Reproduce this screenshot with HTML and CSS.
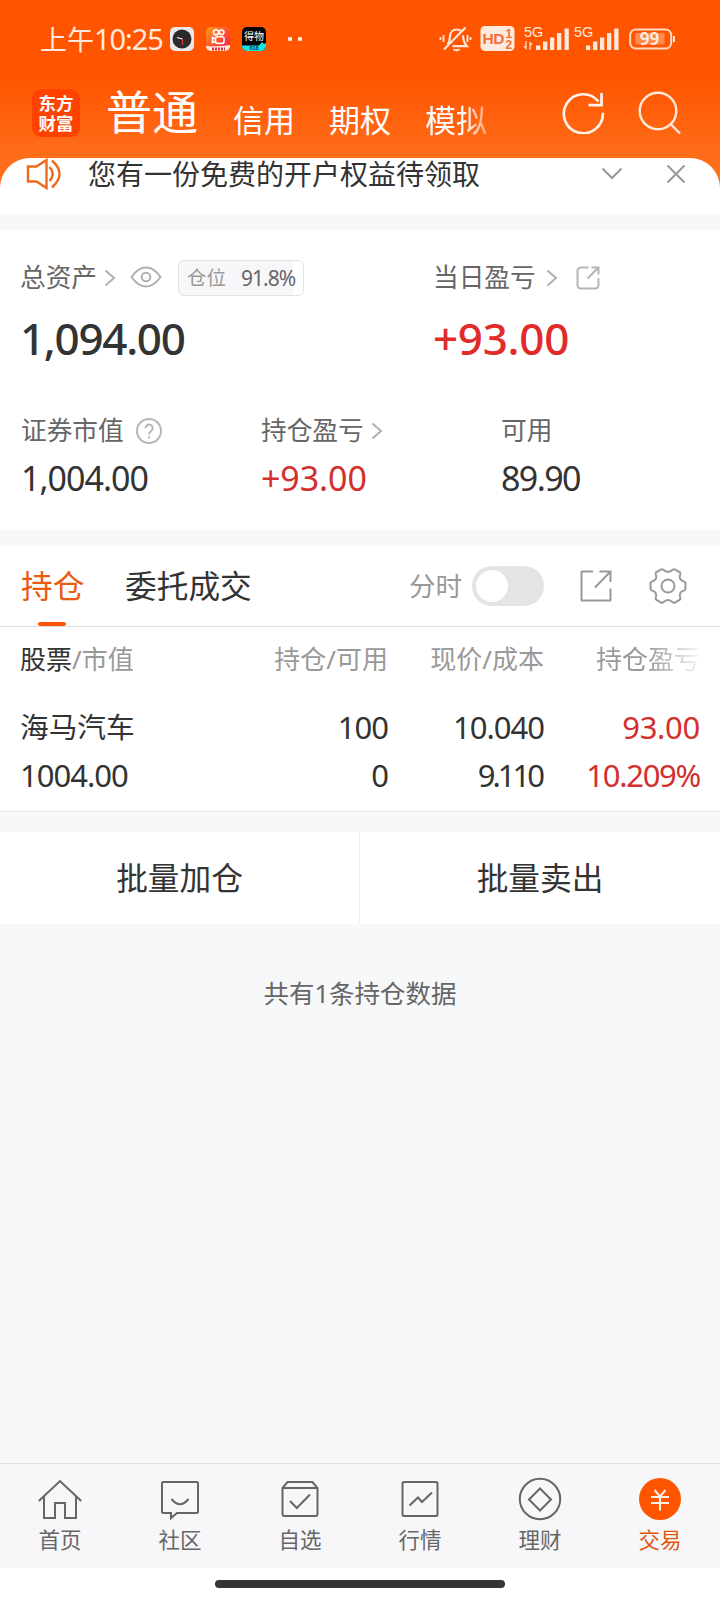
FILE: index.html
```
<!DOCTYPE html>
<html lang="zh-CN">
<head>
  <meta charset="UTF-8">
  <title>交易 - 持仓</title>
  <link rel="stylesheet" href="styles.css">
</head>
<body>

<div class="app">
  <header class="top">
    <div class="status">
      <span class="hora">上午<b>10:25</b></span>
      <svg class="app-icon" width="24" height="24" viewBox="0 0 24 24">
        <rect width="24" height="24" rx="5" fill="#e9e9e9"/>
        <circle cx="12" cy="12" r="9.5" fill="#2b2b2b"/>
        <path d="M7 10.5l5.500 1.500" stroke="#fff" stroke-width="1.200"/>
        <path d="M12.500 12v6" stroke="#e0402c" stroke-width="1.200"/>
      </svg>
      <svg class="app-icon" width="24" height="24" viewBox="0 0 24 24">
        <defs>
          <linearGradient id="ks" x1="0" y1="0" x2="1" y2="1"><stop offset="0" stop-color="#ffa21a"/><stop offset=".55" stop-color="#ff4a33"/><stop offset="1" stop-color="#f5234f"/></linearGradient>
          <clipPath id="r5"><rect width="24" height="24" rx="5"/></clipPath>
        </defs>
        <g clip-path="url(#r5)">
          <rect width="24" height="24" fill="url(#ks)"/>
          <path d="M0 19q12 1 24-1v6H0z" fill="#ffe9dc"/>
          <g fill="none" stroke="#fff" stroke-width="1.600"><circle cx="10" cy="5.300" r="2.600"/><circle cx="15.600" cy="5.300" r="2.300"/><rect x="9.500" y="9.800" width="8.500" height="6.600" rx="1.800"/><path d="M9.500 12l-3-1.400v5l3-1.400"/></g>
          <path d="M6 22h13" stroke="#e3323c" stroke-width="3" stroke-dasharray="2 1"/>
        </g>
      </svg>
      <svg class="app-icon" width="24" height="24" viewBox="0 0 24 24">
        <g clip-path="url(#r5)">
          <rect width="24" height="24" fill="#050505"/>
          <path d="M0 18.500h17l3-3.500 2 2 2-1v8H0z" fill="#14e5e8"/>
          <text x="12" y="12.500" class="dewu">得物</text>
          <text x="12" y="23" class="dewu-618">618</text>
        </g>
      </svg>
      <span class="dots"><i></i><i></i></span>

      <svg class="sys" width="240" height="32" viewBox="0 0 240 32">
        <g fill="none" stroke="#ffe6d8" stroke-width="2.200">
          <path d="M8.500 21.500c2-2 2.300-4 2.300-7 0-5 3-8 7-8 2 0 3.500.600 4.800 2M24 12.500c.2 5 1 7.500 4 10.700H13.500"/>
          <path d="M5 26.500L26.500 4.500"/>
          <path d="M4.500 12v7M1.500 14v3M28.500 12v7M31.500 14v3" stroke-width="1.800"/>
          <path d="M14 26.500q3.500 3 7 0z" fill="#ffe6d8" stroke-width="1"/>
        </g>
        <rect x="41.500" y="3" width="34" height="25" rx="4.500" fill="#ffe9dd"/>
        <text x="43.500" y="21" class="hd">HD</text>
        <text x="66.500" y="14.500" class="hd-n">1</text>
        <text x="66.500" y="25.500" class="hd-n">2</text>
        <g fill="#ffe9dd">
          <text x="85" y="14" class="g5">5G</text>
          <path d="M87.500 18v9l-3.200-4h2v-5zM90.500 27v-9l3.200 4h-2v5z"/>
          <path d="M97 22.500h4.300v4.500H97zM104 18.500h4.300V27H104zM111 14.500h4.300V27H111zM118 10h4.300v17H118zM125.500 5.500h4.300V27h-4.300z"/>
          <text x="135" y="14" class="g5">5G</text>
          <path d="M147 22.500h4.300v4.500H147zM154 18.500h4.300V27H154zM161 14.500h4.300V27H161zM168 10h4.300v17H168zM175.200 5.500h4.300V27h-4.300z"/>
        </g>
        <rect x="191.200" y="6.500" width="41" height="19" rx="5.500" fill="none" stroke="#ffd9c4" stroke-width="2"/>
        <rect x="196" y="10" width="29.500" height="11.500" fill="#ff8a4d"/>
        <path d="M235 13v6" stroke="#ffe9dd" stroke-width="2"/>
        <text x="210.500" y="22" class="bat">99</text>
      </svg>
    </div>

    <div class="cuentas">
      <div class="logo"><span>东方</span><span>财富</span></div>
      <span class="cuenta activa">普通</span>
      <span class="cuenta">信用</span>
      <span class="cuenta">期权</span>
      <span class="cuenta fade">模拟</span>
      <svg class="refresh" width="44" height="44" viewBox="0 0 44 44" fill="none" stroke="#fff3ea" stroke-width="2.700">
        <path d="M41.800 22.800A19.500 19.500 0 1 1 37.500 11.500"/>
        <path d="M40.500 3v12.200H27.500"/>
      </svg>
      <svg class="search" width="44" height="44" viewBox="0 0 44 44" fill="none" stroke="#ffe8d9" stroke-width="2.400">
        <circle cx="20" cy="20" r="18.300"/>
        <path d="M32.500 33l9.500 9.500"/>
      </svg>
    </div>
  </header>

  <div class="aviso">
    <svg class="altavoz" width="36" height="32" viewBox="0 0 36 32" fill="none" stroke="#ec6a1e" stroke-width="2.400">
      <path d="M2 8.500h8.500L20.500 2v28l-10-6.500H2zM23.500 9q6.500 7 0 14M26 2.500q15 13.500 0 27"/>
    </svg>
    <span class="aviso-texto">您有一份免费的开户权益待领取</span>
    <svg class="abajo" width="22" height="14" viewBox="0 0 22 14" fill="none" stroke="#999" stroke-width="2"><path d="M1.500 1.500l9.500 9.500 9.500-9.500"/></svg>
    <svg class="cerrar" width="20" height="20" viewBox="0 0 20 20" fill="none" stroke="#999" stroke-width="2"><path d="M1.500 1.500l17 17M18.500 1.500l-17 17"/></svg>
  </div>

  <section class="activos">
    <div class="fila principal">
      <div class="dato grande">
        <div class="etiqueta"><span>总资产</span>
          <svg class="flecha" width="12" height="18" viewBox="0 0 12 18"><path d="M1.500 1.500L10 9l-8.500 7.500"/></svg>
          <svg class="ojo" width="32" height="22" viewBox="0 0 32 22" fill="none" stroke="#b0b0b0" stroke-width="2"><path d="M1.500 11Q8 1.500 16 1.500T30.500 11Q24 20.500 16 20.500T1.500 11z"/><circle cx="16" cy="11" r="4.300"/></svg>
          <span class="posicion">仓位<em>91.8%</em></span>
        </div>
        <div class="valor">1,094.00</div>
      </div>
      <div class="dato grande">
        <div class="etiqueta"><span>当日盈亏</span>
          <svg class="flecha separada" width="12" height="18" viewBox="0 0 12 18"><path d="M1.500 1.500L10 9l-8.500 7.500"/></svg>
          <svg class="compartir" width="24" height="24" viewBox="0 0 24 24" fill="none" stroke="#b5b5b5" stroke-width="2"><path d="M12.500 1.500H5A3.500 3.500 0 0 0 1.500 5v14A3.500 3.500 0 0 0 5 22.500h14a3.500 3.500 0 0 0 3.500-3.500v-7M15.500 1.500h7V8.500M22.500 1.500L11.500 12.500"/></svg>
        </div>
        <div class="valor rojo">+93.00</div>
      </div>
    </div>
    <div class="fila detalle">
      <div class="dato">
        <div class="etiqueta"><span>证券市值</span>
          <svg class="ayuda" width="26" height="26" viewBox="0 0 26 26" fill="none" stroke="#b5b5b5" stroke-width="1.900"><circle cx="13" cy="13" r="12"/><path d="M9.500 10.200a3.600 3.600 0 1 1 5.600 3c-1.500 1-2.100 1.600-2.100 3.200M13 18.300v2.200"/></svg>
        </div>
        <div class="valor">1,004.00</div>
      </div>
      <div class="dato">
        <div class="etiqueta"><span>持仓盈亏</span>
          <svg class="flecha" width="12" height="18" viewBox="0 0 12 18"><path d="M1.500 1.500L10 9l-8.500 7.500"/></svg>
        </div>
        <div class="valor rojo">+93.00</div>
      </div>
      <div class="dato">
        <div class="etiqueta"><span>可用</span></div>
        <div class="valor corto">89.90</div>
      </div>
    </div>
  </section>

  <section class="posiciones">
    <div class="pestanas">
      <span class="pestana activa">持仓</span>
      <span class="pestana">委托成交</span>
      <span class="fenshi">分时</span>
      <span class="interruptor"></span>
      <svg class="exportar" width="32" height="32" viewBox="0 0 32 32" fill="none" stroke="#999" stroke-width="2"><path d="M13 1.500H2a.5.500 0 0 0-.5.500v28a.5.500 0 0 0 .5.500h28a.5.500 0 0 0 .5-.5V18.500M19.500 1.500h11V12M30.500 1.500L15 17.500"/></svg>
      <svg class="ajustes" width="38" height="38" viewBox="0 0 38 38" fill="none" stroke="#999" stroke-width="2">
        <path d="M36.500 16.500Q36.500 15 35.300 14.600Q32.300 13.500 31.200 11.900Q30.200 9.800 31.300 6.800Q31.500 5.700 30.600 5.200L25.800 2.400Q24.800 1.900 24 2.600Q21.500 4.900 19 4.900Q16.500 4.900 14 2.600Q13.200 1.900 12.200 2.400L7.400 5.200Q6.500 5.700 6.700 6.800Q7.800 9.800 6.800 11.900Q5.700 13.500 2.700 14.600Q1.500 15 1.500 16.500V21.500Q1.500 23 2.700 23.400Q5.700 24.500 6.800 26.100Q7.800 28.200 6.700 31.200Q6.500 32.300 7.400 32.800L12.200 35.600Q13.200 36.100 14 35.400Q16.500 33.100 19 33.100Q21.500 33.100 24 35.400Q24.800 36.100 25.800 35.600L30.600 32.800Q31.500 32.300 31.300 31.200Q30.200 28.200 31.200 26.100Q32.300 24.500 35.300 23.400Q36.500 23 36.500 21.500Z"/>
        <circle cx="19" cy="19" r="6.500"/>
      </svg>
    </div>

    <div class="tabla">
      <div class="cab"><b>股票</b>/市值</div>
      <div class="cab">持仓/可用</div>
      <div class="cab">现价/成本</div>
      <div class="cab fade">持仓盈亏</div>

      <div class="celda nombre">海马汽车</div>
      <div class="celda">100</div>
      <div class="celda">10.040</div>
      <div class="celda rojo">93.00</div>

      <div class="celda">1004.00</div>
      <div class="celda">0</div>
      <div class="celda coste">9.110</div>
      <div class="celda rojo pct">10.209%</div>
    </div>
  </section>

  <div class="lotes">
    <div class="lote">批量加仓</div>
    <div class="lote">批量卖出</div>
  </div>

  <div class="resumen">共有1条持仓数据</div>

  <nav class="nav">
    <div class="item">
      <svg width="44" height="44" viewBox="0 0 44 44"><path d="M.800 24L22 4l21.200 20M6 19.500V41h11V26h10v15h11V19.500"/></svg>
      首页
    </div>
    <div class="item">
      <svg width="44" height="44" viewBox="0 0 44 44"><path d="M5 5h34a1 1 0 0 1 1 1v29a1 1 0 0 1-1 1H19l-6 5v-5H5a1 1 0 0 1-1-1V6a1 1 0 0 1 1-1zM13.500 22q8.500 10.500 17 0"/></svg>
      社区
    </div>
    <div class="item">
      <svg width="44" height="44" viewBox="0 0 44 44"><path d="M4.500 11l5-6h25l5 6v26a2 2 0 0 1-2 2h-31a2 2 0 0 1-2-2zM4.500 11h35M12 24l6.800 7L32 17.500"/></svg>
      自选
    </div>
    <div class="item">
      <svg width="44" height="44" viewBox="0 0 44 44"><rect x="4.500" y="5" width="35" height="34" rx="1.500"/><path d="M11.500 28.500l8.500-8 4 4.500 10-9.500"/></svg>
      行情
    </div>
    <div class="item">
      <svg width="44" height="44" viewBox="0 0 44 44"><circle cx="22" cy="22" r="20.200"/><path d="M22 11.500L33 22.500 22 33.500 11 22.500z"/></svg>
      理财
    </div>
    <div class="item activa">
      <svg width="44" height="44" viewBox="0 0 44 44"><circle cx="22" cy="22" r="21" class="moneda"/><path class="yen" d="M16.500 13l5.500 6.500 5.500-6.500M13 20h18M13 26h18M22 19.500V33.500"/></svg>
      交易
    </div>
  </nav>
  <div class="gesto"><i></i></div>
</div>

</body>
</html>
```
FILE: styles.css
```
* {
  box-sizing: border-box;
}

body {
  margin: 0;
  font-family: "Noto Sans", "Noto Sans CJK SC", sans-serif;
  background: #f7f8fa;
  color: #333;
}

b, em, i {
  font-weight: inherit;
  font-style: normal;
}

svg {
  display: block;
  flex: none;
}

.app {
  width: 720px;
  height: 1600px;
  display: flex;
  flex-direction: column;
  overflow: hidden;
  white-space: nowrap;
}

/* cabecera */
.top {
  height: 188px;
  flex: none;
  background: linear-gradient(#ff5500 75px, #ff6d1a 158px);
}

.status {
  height: 78px;
  padding: 0 40px;
  display: flex;
  align-items: center;
  color: #ffe9dd;
}

.hora {
  width: 130px;
  font-size: 27px;
  line-height: 36px;
}

.hora b {
  font-size: 29px;
  letter-spacing: -1.1px;
}

.app-icon {
  margin-right: 12px;
}

.dewu {
  fill: #fff;
  font-size: 10px;
  text-anchor: middle;
}

.dewu-618 {
  fill: #06383a;
  font: 700 5.5px "Liberation Sans", sans-serif;
  text-anchor: middle;
}

.dots {
  display: flex;
  gap: 6px;
  margin-left: 10px;
}

.dots i {
  width: 4px;
  height: 4px;
  border-radius: 1px;
  background: #ffe9dd;
}

.sys {
  margin-left: 137px;
}

.hd {
  font: 700 15.5px "Liberation Sans", sans-serif;
  letter-spacing: -0.5px;
  fill: #f0703a;
}

.hd-n {
  font: 700 12px "Liberation Sans", sans-serif;
  fill: #f0703a;
}

.g5 {
  font: 14.5px "Liberation Sans", sans-serif;
}

.bat {
  font: 600 17px "Noto Sans", sans-serif;
  fill: #fff0e6;
  text-anchor: middle;
}

.cuentas {
  height: 80px;
  padding-left: 32px;
  display: flex;
  align-items: flex-start;
  color: #fff;
}

.logo {
  width: 48px;
  height: 48px;
  margin: 11px 26px 0 0;
  border-radius: 9px;
  background: #ff4200;
  display: flex;
  flex-direction: column;
  align-items: center;
  justify-content: center;
  font-size: 17.5px;
  font-weight: 700;
  line-height: 20px;
}

.cuenta {
  width: 96px;
  padding-top: 19px;
  font-size: 31px;
  line-height: 46px;
}

.cuenta.activa {
  width: 127px;
  padding-top: 1px;
  font-size: 46px;
  line-height: 65px;
}

.cuenta.fade {
  width: 62px;
  -webkit-mask-image: linear-gradient(to right, #000 60%, rgba(0,0,0,0.4));
  mask-image: linear-gradient(to right, #000 60%, rgba(0,0,0,0.4));
}

.refresh {
  margin: 12px 0 0 74px;
}

.search {
  margin: 13px 0 0 33px;
}

/* aviso */
.aviso {
  height: 56px;
  flex: none;
  margin-top: -30px;
  padding: 0 22px 24px 26px;
  display: flex;
  align-items: center;
  background: #fff;
  border-radius: 30px 30px 0 0;
}

.aviso-texto {
  width: 513px;
  margin-left: 26px;
  font-size: 28px;
  line-height: 32px;
}

.cerrar {
  margin-left: 43px;
}

/* activos */
.activos {
  height: 300px;
  flex: none;
  margin-top: 16px;
  padding: 28px 21px 0 20px;
  background: #fff;
}

.fila {
  display: grid;
}

.principal {
  grid-template-columns: 413px 1fr;
}

.detalle {
  grid-template-columns: 240px 240px 1fr;
  margin-top: 43px;
  padding-left: 1px;
}

.etiqueta {
  height: 40px;
  display: flex;
  align-items: center;
  font-size: 25.7px;
  line-height: 36px;
  color: #666;
}

.flecha {
  margin-left: 7px;
  fill: none;
  stroke: #b0b0b0;
  stroke-width: 2;
}

.flecha.separada {
  margin-left: 10px;
}

.ojo {
  margin: -2px 0 0 14px;
}

.compartir {
  margin-left: 18px;
}

.ayuda {
  margin-left: 12px;
}

.posicion {
  width: 126px;
  height: 36px;
  margin-left: 16px;
  padding: 0 0 1px 8px;
  display: flex;
  align-items: center;
  border: 1px solid #e2e3e6;
  border-radius: 6px;
  background: linear-gradient(to right, #f7f7fa 91.8%, #fff 91.8%);
  font-size: 19.5px;
  color: #999;
}

.posicion em {
  margin-left: 15px;
  font-size: 21px;
  letter-spacing: -1px;
  color: #666;
}

.valor {
  margin-top: 5px;
  font-size: 34px;
  line-height: 44px;
  letter-spacing: -1px;
}

.grande .valor {
  height: 60px;
  margin-top: 10px;
  font-size: 44px;
  font-weight: 500;
  line-height: 60px;
  letter-spacing: -1.3px;
}

.valor.corto {
  letter-spacing: -1.6px;
}

.valor.rojo {
  letter-spacing: -0.1px;
}

.grande .valor.rojo {
  color: #e12a2a;
  letter-spacing: -0.3px;
}

.rojo {
  color: #d32f2f;
}

/* posiciones */
.posiciones {
  flex: none;
  height: 266px;
  margin-top: 16px;
  background: #fff;
  border-bottom: 1px solid #e6e7ea;
}

.pestanas {
  height: 81px;
  padding: 0 33px 0 21px;
  display: flex;
  align-items: center;
  border-bottom: 1px solid #dedede;
}

.pestana {
  position: relative;
  margin-right: 42px;
  font-size: 31.7px;
  line-height: 78px;
}

.pestana.activa {
  width: 62px;
  color: #ea5a10;
}

.pestana.activa::after {
  content: "";
  position: absolute;
  left: 17px;
  bottom: -1px;
  width: 28px;
  height: 4px;
  border-radius: 2px;
  background: #ff5500;
}

.fenshi {
  margin-left: auto;
  padding-bottom: 3px;
  font-size: 26.5px;
  color: #999;
}

.interruptor {
  width: 72px;
  height: 40px;
  margin-left: 10px;
  padding: 4px;
  border-radius: 20px;
  background: #e4e4e6;
}

.interruptor::before {
  content: "";
  display: block;
  width: 32px;
  height: 32px;
  border-radius: 50%;
  background: #fff;
}

.exportar {
  margin-left: 36px;
}

.ajustes {
  margin-left: 37px;
}

.tabla {
  padding-left: 20px;
  display: grid;
  grid-template-columns: 180px 188px 156px 156px;
  grid-template-rows: 76px 48px 48px;
}

.cab, .celda {
  text-align: right;
}

.cab:nth-child(4n+1), .celda:nth-child(4n+1) {
  text-align: left;
}

.cab {
  padding-top: 12px;
  font-size: 26px;
  line-height: 40px;
  color: #999;
}

.cab b {
  color: #333;
}

.cab.fade {
  -webkit-mask-image: linear-gradient(to right, #000 66%, rgba(0,0,0,0.1) 100%);
  mask-image: linear-gradient(to right, #000 66%, rgba(0,0,0,0.1) 100%);
}

.celda {
  font-size: 31px;
  line-height: 48px;
  letter-spacing: -1px;
}

.celda.nombre {
  font-size: 28.7px;
  letter-spacing: 0;
}

.celda.coste {
  letter-spacing: -3px;
  padding-right: 2px;
}

.celda.rojo {
  color: #d32f2f;
  letter-spacing: -0.3px;
}

.celda.pct {
  letter-spacing: -1.3px;
}

/* operaciones por lotes */
.lotes {
  height: 92px;
  flex: none;
  margin-top: 20px;
  display: grid;
  grid-template-columns: 360px 1fr;
  background: #fff;
}

.lote {
  text-align: center;
  font-size: 31.7px;
  line-height: 91px;
}

.lote:first-child {
  border-right: 1px solid #f0f0f2;
}

.resumen {
  margin-top: 49px;
  text-align: center;
  font-size: 25.5px;
  line-height: 40px;
  color: #666;
}

/* barra inferior */
.nav {
  height: 105px;
  flex: none;
  margin-top: auto;
  padding-top: 13px;
  display: grid;
  grid-template-columns: repeat(6, 1fr);
  border-top: 1px solid #e2e3e6;
  background: #f7f7fa;
}

.item {
  display: flex;
  flex-direction: column;
  align-items: center;
  font-size: 21.5px;
  line-height: 38px;
  color: #666;
}

.item svg {
  fill: none;
  stroke: #666;
  stroke-width: 2;
}

.item.activa {
  color: #e0560f;
}

.item .moneda {
  fill: #ff5500;
  stroke: none;
}

.item .yen {
  stroke: #fff0e6;
}

.gesto {
  height: 32px;
  flex: none;
  padding-top: 12px;
  background: #fff;
}

.gesto i {
  display: block;
  width: 290px;
  height: 8px;
  margin: 0 auto;
  border-radius: 4px;
  background: #333;
}
```
